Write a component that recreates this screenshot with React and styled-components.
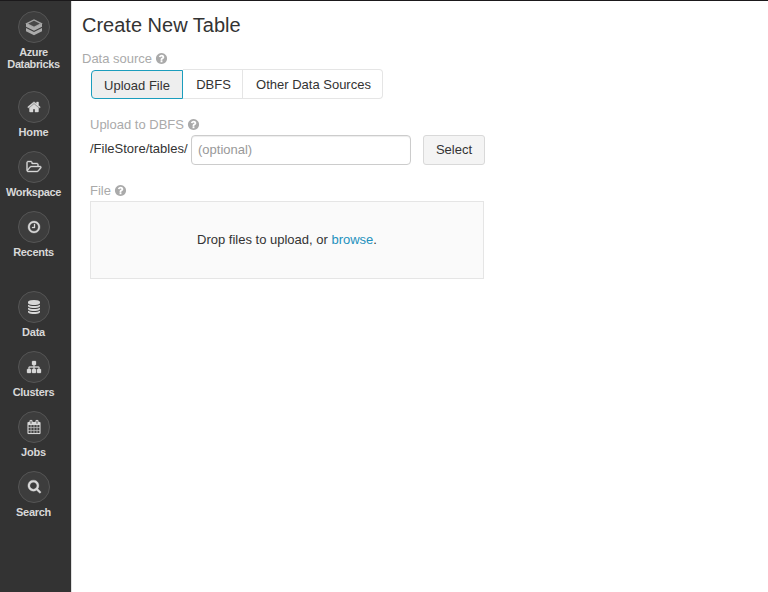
import React from "react";
import styled, { createGlobalStyle } from "styled-components";

const GlobalStyle = createGlobalStyle`
  * { box-sizing: border-box; }
  body {
    margin: 0;
    background: #fff;
    color: #333;
    font: 13px/20px "Liberation Sans", Arial, sans-serif;
  }
`;

const Page = styled.div`
  display: flex;
  height: 592px;
  overflow: hidden;
  border-top: 1px solid #1b191b;
`;

const Sidebar = styled.nav`
  flex: none;
  width: 72px;
  padding: 10px 4px 0 0;
  background: #333;
  border-right: 1px solid #e0e0e0;
  display: flex;
  flex-direction: column;
`;

const NavItem = styled.a`
  display: flex;
  flex-direction: column;
  align-items: center;
  flex: none;
  height: ${(p) => (p.$tall ? 80 : 60)}px;
  color: #d8d8d8;
`;

const IconCircle = styled.span`
  display: flex;
  align-items: center;
  justify-content: center;
  width: 32px;
  height: 32px;
  margin-left: 1px;
  border: 1px solid #555;
  border-radius: 50%;
  background: #3d3d3d;
`;

const NavLabel = styled.span`
  margin-top: 3px;
  font-size: 11px;
  line-height: 12px;
  font-weight: 700;
  letter-spacing: ${(p) => p.$spacing || 0}px;
  text-align: center;
  white-space: pre-line;
`;

const Glyph = styled.svg`
  display: block;
  width: ${(p) => p.$size}px;
  height: ${(p) => p.$size}px;
  fill: currentColor;
  stroke: currentColor;
  stroke-width: ${(p) => p.$weight}px;
  overflow: visible;
`;

const BrandMark = styled.svg`
  display: block;
  width: 18px;
  height: 18px;
`;

const Main = styled.main`
  flex: 1;
  padding: 9px 0 0 10px;
`;

const Title = styled.h1`
  margin: 0 0 9px;
  font-size: 20px;
  line-height: 30px;
  font-weight: 400;
`;

const FieldLabel = styled.div`
  display: flex;
  align-items: center;
  gap: 3px;
  height: 20px;
  color: #aaa;

  ${Glyph} { margin-bottom: 1px; }
`;

const Section = styled.section`
  margin: ${(p) => p.$top}px 0 0 8px;
`;

const Segments = styled.div`
  display: flex;
  align-items: flex-end;
  height: 30px;
  margin-left: 9px;
`;

const Segment = styled.button`
  width: ${(p) => p.$width}px;
  height: ${(p) => (p.$active ? 29 : 30)}px;
  padding: ${(p) => (p.$active ? "2px 0 0" : "1px 0 0 2px")};
  border: 1px solid ${(p) => (p.$active ? "#1b9dbd" : "#e5e5e5")};
  border-left-width: ${(p) => (p.$active ? 1 : 0)}px;
  border-radius: ${(p) => p.$radius || "0"};
  background: ${(p) => (p.$active ? "#eee" : "#fff")};
  color: #333;
  font: inherit;
  white-space: nowrap;
`;

const PathRow = styled.div`
  display: flex;
  align-items: flex-start;
`;

const PathPrefix = styled.span`
  width: 101px;
  margin-top: 4px;
`;

const PathInput = styled.input`
  width: 220px;
  height: 30px;
  padding: 0 6px 2px;
  border: 1px solid #ccc;
  border-radius: 4px;
  box-shadow: inset 0 1px 1px rgba(0, 0, 0, 0.075);
  font: inherit;
  &::placeholder { color: #999; opacity: 1; }
`;

const SelectButton = styled.button`
  width: 62px;
  height: 30px;
  margin-left: 12px;
  padding: 0;
  border: 1px solid #d9d9d9;
  border-radius: 3px;
  background: #f4f4f4;
  color: #333;
  font: inherit;
`;

const DropZone = styled.div`
  display: flex;
  align-items: center;
  justify-content: center;
  width: 394px;
  height: 78px;
  border: 1px solid #e5e5e5;
  background: #fafafa;
  white-space: pre;
`;

const BrowseLink = styled.a`
  color: #2391bd;
`;

const icons = {
  home: "M1472 992v480q0 26-19 45t-45 19h-384v-384h-256v384h-384q-26 0-45-19t-19-45v-480q0-1 .5-3t.5-3l575-474 575 474q1 2 1 6zm223-69l-62 74q-8 9-21 11h-3q-13 0-21-7l-692-577-692 577q-12 8-24 7-13-2-21-11l-62-74q-8-10-7-23.5t11-21.5l719-599q32-26 76-26t76 26l244 204v-195q0-14 9-23t23-9h192q14 0 23 9t9 23v408l219 182q10 8 11 21.5t-7 23.5z",
  folder: "M1717 931q0-35-53-35h-1088q-40 0-85.5 21.5t-71.5 52.5l-294 363q-18 24-18 40 0 35 53 35h1088q40 0 86-22t71-53l294-363q18-22 18-39zm-1141-163h768v-160q0-40-28-68t-68-28h-576q-40 0-68-28t-28-68v-64q0-40-28-68t-68-28h-320q-40 0-68 28t-28 68v853l256-315q44-53 116-87.5t140-34.5zm1269 163q0 62-46 120l-295 363q-43 53-116 87.5t-140 34.5h-1088q-92 0-158-66t-66-158v-960q0-92 66-158t158-66h320q92 0 158 66t66 158v32h544q92 0 158 66t66 158v160h192q54 0 99 24.5t67 70.5q15 32 15 68z",
  clock: "M1024 544v448q0 14-9 23t-23 9h-320q-14 0-23-9t-9-23v-64q0-14 9-23t23-9h224v-352q0-14 9-23t23-9h64q14 0 23 9t9 23zm416 352q0-148-73-273t-198-198-273-73-273 73-198 198-73 273 73 273 198 198 273 73 273-73 198-198 73-273zm224 0q0 209-103 385.5t-279.5 279.5-385.5 103-385.5-103-279.5-279.5-103-385.5 103-385.5 279.5-279.5 385.5-103 385.5 103 279.5 279.5 103 385.5z",
  database: "M896 768q237 0 443-43t325-127v170q0 69-103 128t-280 93.5-385 34.5-385-34.5-280-93.5-103-128v-170q119 84 325 127t443 43zm0 768q237 0 443-43t325-127v170q0 69-103 128t-280 93.5-385 34.5-385-34.5-280-93.5-103-128v-170q119 84 325 127t443 43zm0-384q237 0 443-43t325-127v170q0 69-103 128t-280 93.5-385 34.5-385-34.5-280-93.5-103-128v-170q119 84 325 127t443 43zm0-1152q208 0 385 34.5t280 93.5 103 128v128q0 69-103 128t-280 93.5-385 34.5-385-34.5-280-93.5-103-128v-128q0-69 103-128t280-93.5 385-34.5z",
  sitemap: "M1792 1248v320q0 40-28 68t-68 28h-320q-40 0-68-28t-28-68v-320q0-40 28-68t68-28h96v-192h-512v192h96q40 0 68 28t28 68v320q0 40-28 68t-68 28h-320q-40 0-68-28t-28-68v-320q0-40 28-68t68-28h96v-192h-512v192h96q40 0 68 28t28 68v320q0 40-28 68t-68 28h-320q-40 0-68-28t-28-68v-320q0-40 28-68t68-28h96v-192q0-52 38-90t90-38h512v-192h-96q-40 0-68-28t-28-68v-320q0-40 28-68t68-28h320q40 0 68 28t28 68v320q0 40-28 68t-68 28h-96v192h512q52 0 90 38t38 90v192h96q40 0 68 28t28 68z",
  calendar: "M192 1664h288v-288h-288v288zm352 0h320v-288h-320v288zm-352-352h288v-320h-288v320zm352 0h320v-320h-320v320zm-352-384h288v-288h-288v288zm736 736h320v-288h-320v288zm-384-736h320v-288h-320v288zm768 736h288v-288h-288v288zm-384-352h320v-320h-320v320zm-352-864v-288q0-13-9.5-22.5t-22.5-9.5h-64q-13 0-22.5 9.5t-9.5 22.5v288q0 13 9.5 22.5t22.5 9.5h64q13 0 22.5-9.5t9.5-22.5zm736 864h288v-320h-288v320zm-384-384h320v-288h-320v288zm384 0h288v-288h-288v288zm32-480v-288q0-13-9.5-22.5t-22.5-9.5h-64q-13 0-22.5 9.5t-9.5 22.5v288q0 13 9.5 22.5t22.5 9.5h64q13 0 22.5-9.5t9.5-22.5zm384-64v1280q0 52-38 90t-90 38h-1408q-52 0-90-38t-38-90v-1280q0-52 38-90t90-38h128v-96q0-66 47-113t113-47h64q66 0 113 47t47 113v96h384v-96q0-66 47-113t113-47h64q66 0 113 47t47 113v96h128q52 0 90 38t38 90z",
  search: "M1216 832q0-185-131.5-316.5t-316.5-131.5-316.5 131.5-131.5 316.5 131.5 316.5 316.5 131.5 316.5-131.5 131.5-316.5zm512 832q0 52-38 90t-90 38q-54 0-90-38l-343-342q-179 124-399 124-143 0-273.5-55.5t-225-150-150-225-55.5-273.5 55.5-273.5 150-225 225-150 273.5-55.5 273.5 55.5 225 150 150 225 55.5 273.5q0 220-124 399l343 343q37 37 37 90z",
  help: "M1024 1376v-192q0-14-9-23t-23-9h-192q-14 0-23 9t-9 23v192q0 14 9 23t23 9h192q14 0 23-9t9-23zm256-672q0-88-55.5-163t-138.5-116-170-41q-243 0-371 213-15 24 8 42l132 100q7 6 19 6 16 0 25-12 53-68 86-92 34-24 86-24 48 0 85.5 26t37.5 59q0 38-20 61t-68 45q-63 28-115.5 86.5t-52.5 125.5v36q0 14 9 23t23 9h192q14 0 23-9t9-23q0-19 21.5-49.5t54.5-49.5q32-18 49-28.5t46-35 44.5-48 28-60.5 12.5-81zm384 192q0 209-103 385.5t-279.5 279.5-385.5 103-385.5-103-279.5-279.5-103-385.5 103-385.5 279.5-279.5 385.5-103 385.5 103 279.5 279.5 103 385.5z",
};

const Icon = ({ name, size = 14, weight = 0, box = "0 0 1792 1792" }) => (
  <Glyph $size={size} $weight={weight} viewBox={box} aria-hidden="true">
    <path d={icons[name]} />
  </Glyph>
);

const Brand = () => (
  <BrandMark viewBox="0 0 18 18" aria-hidden="true">
    <path d="M1.700 5.600 9 2l7.300 3.600L9 9.400z" fill="#484848" stroke="#a2a2a2" strokeWidth="1.300" />
    <path d="M1 5.600 9 9.600l8-4v3.200L9 12.800 1 8.800z" fill="#ababab" />
    <path d="M1 10 9 14l8-4v3.200L9 17.200 1 13.200z" fill="#ababab" />
  </BrandMark>
);

const navItems = [
  { label: "Home", icon: "home", spacing: -0.15, weight: 50 },
  { label: "Workspace", icon: "folder", spacing: -0.4, weight: 50 },
  { label: "Recents", icon: "clock", spacing: -0.3, tall: true, weight: 40 },
  { label: "Data", icon: "database", spacing: -0.2 },
  { label: "Clusters", icon: "sitemap", spacing: -0.3, weight: 40 },
  { label: "Jobs", icon: "calendar", spacing: -0.2, weight: 20 },
  { label: "Search", icon: "search", spacing: -0.3, weight: 40, box: "-50 110 1792 1792" },
];

export default function App() {
  return (
    <>
      <GlobalStyle />
      <Page>
        <Sidebar>
          <NavItem $tall>
            <IconCircle><Brand /></IconCircle>
            <NavLabel $spacing={-0.4}>{"Azure\nDatabricks"}</NavLabel>
          </NavItem>
          {navItems.map((item) => (
            <NavItem key={item.label} $tall={item.tall}>
              <IconCircle><Icon name={item.icon} weight={item.weight} box={item.box} /></IconCircle>
              <NavLabel $spacing={item.spacing}>{item.label}</NavLabel>
            </NavItem>
          ))}
        </Sidebar>
        <Main>
          <Title>Create New Table</Title>
          <FieldLabel>Data source <Icon name="help" size={13} /></FieldLabel>
          <Segments>
            <Segment $active $width={92} $radius="4px 0 0 4px">Upload File</Segment>
            <Segment $width={60}>DBFS</Segment>
            <Segment $width={140} $radius="0 4px 4px 0">Other Data Sources</Segment>
          </Segments>
          <Section $top={16}>
            <FieldLabel>Upload to DBFS <Icon name="help" size={13} /></FieldLabel>
            <PathRow>
              <PathPrefix>/FileStore/tables/</PathPrefix>
              <PathInput placeholder="(optional)" />
              <SelectButton>Select</SelectButton>
            </PathRow>
          </Section>
          <Section $top={16}>
            <FieldLabel>File <Icon name="help" size={13} /></FieldLabel>
            <DropZone>Drop files to upload, or <BrowseLink>browse</BrowseLink>.</DropZone>
          </Section>
        </Main>
      </Page>
    </>
  );
}
